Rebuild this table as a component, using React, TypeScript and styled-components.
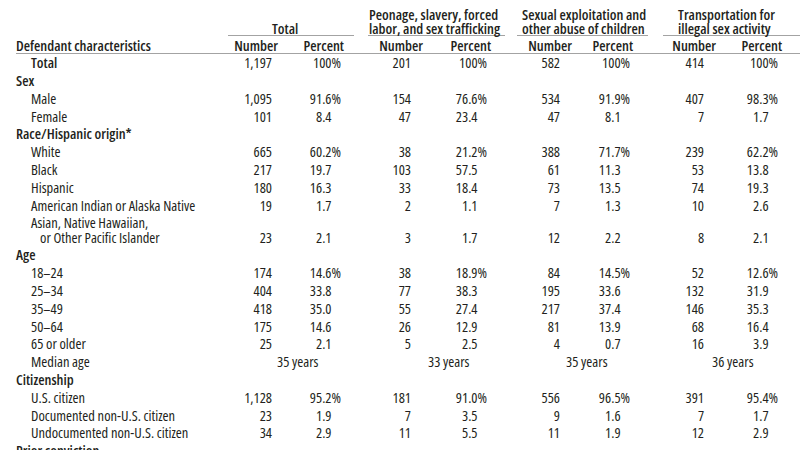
import React from "react";
import styled, { createGlobalStyle } from "styled-components";

type Group = {
  title: string[];
  numW: number;
  pctW: number;
  numPad: number;
  pctPad: number;
  pctHeadPad: number;
  ruleLeft: number;
  titlePad: number;
  medianPad: number;
};

type Row =
  | { kind: "total" | "item"; label: string[]; values: string[] }
  | { kind: "cat"; label: string[] }
  | { kind: "median"; label: string[]; medians: string[] };

const groups: Group[] = [
  { title: ["", "Total"], numW: 50, pctW: 76, numPad: 6, pctPad: 13, pctHeadPad: 10, ruleLeft: 0, titlePad: 44, medianPad: 49 },
  { title: ["Peonage, slavery, forced", "labor, and sex trafficking"], numW: 69, pctW: 82, numPad: 12, pctPad: 18, pctHeadPad: 14, ruleLeft: 14, titlePad: 1, medianPad: 74 },
  { title: ["Sexual exploitation and", "other abuse of children"], numW: 67, pctW: 76, numPad: 12, pctPad: 18, pctHeadPad: 15, ruleLeft: 12, titlePad: 5, medianPad: 61 },
  { title: ["Transportation for", "illegal sex activity"], numW: 68, pctW: 90, numPad: 12, pctPad: 28, pctHeadPad: 24, ruleLeft: 15, titlePad: 15, medianPad: 64 },
];

const rows: Row[] = [
  { kind: "total", label: ["Total"], values: ["1,197", "100%", "201", "100%", "582", "100%", "414", "100%"] },
  { kind: "cat", label: ["Sex"] },
  { kind: "item", label: ["Male"], values: ["1,095", "91.6%", "154", "76.6%", "534", "91.9%", "407", "98.3%"] },
  { kind: "item", label: ["Female"], values: ["101", "8.4", "47", "23.4", "47", "8.1", "7", "1.7"] },
  { kind: "cat", label: ["Race/Hispanic origin*"] },
  { kind: "item", label: ["White"], values: ["665", "60.2%", "38", "21.2%", "388", "71.7%", "239", "62.2%"] },
  { kind: "item", label: ["Black"], values: ["217", "19.7", "103", "57.5", "61", "11.3", "53", "13.8"] },
  { kind: "item", label: ["Hispanic"], values: ["180", "16.3", "33", "18.4", "73", "13.5", "74", "19.3"] },
  { kind: "item", label: ["American Indian or Alaska Native"], values: ["19", "1.7", "2", "1.1", "7", "1.3", "10", "2.6"] },
  { kind: "item", label: ["Asian, Native Hawaiian,", "or Other Pacific Islander"], values: ["23", "2.1", "3", "1.7", "12", "2.2", "8", "2.1"] },
  { kind: "cat", label: ["Age"] },
  { kind: "item", label: ["18–24"], values: ["174", "14.6%", "38", "18.9%", "84", "14.5%", "52", "12.6%"] },
  { kind: "item", label: ["25–34"], values: ["404", "33.8", "77", "38.3", "195", "33.6", "132", "31.9"] },
  { kind: "item", label: ["35–49"], values: ["418", "35.0", "55", "27.4", "217", "37.4", "146", "35.3"] },
  { kind: "item", label: ["50–64"], values: ["175", "14.6", "26", "12.9", "81", "13.9", "68", "16.4"] },
  { kind: "item", label: ["65 or older"], values: ["25", "2.1", "5", "2.5", "4", "0.7", "16", "3.9"] },
  { kind: "median", label: ["Median age"], medians: ["35 years", "33 years", "35 years", "36 years"] },
  { kind: "cat", label: ["Citizenship"] },
  { kind: "item", label: ["U.S. citizen"], values: ["1,128", "95.2%", "181", "91.0%", "556", "96.5%", "391", "95.4%"] },
  { kind: "item", label: ["Documented non-U.S. citizen"], values: ["23", "1.9", "7", "3.5", "9", "1.6", "7", "1.7"] },
  { kind: "item", label: ["Undocumented non-U.S. citizen"], values: ["34", "2.9", "11", "5.5", "11", "1.9", "12", "2.9"] },
  { kind: "cat", label: ["Prior conviction"] },
];

const GlobalStyle = createGlobalStyle`
  body {
    margin: 0;
    background: #ffffff;
    overflow: hidden;
    font-family: "Open Sans", "Liberation Sans", sans-serif;
    font-stretch: 75%;
    color: #231f20;
  }
`;

const Page = styled.div`
  width: 800px;
  height: 450px;
  overflow: hidden;
`;

const Table = styled.table`
  border-collapse: collapse;
  table-layout: fixed;
  width: 790px;
  margin-left: 16px;
  font-size: 14.5px;
`;

const GroupHead = styled.th`
  padding: 7px 0 0 0;
  vertical-align: bottom;
  font-weight: 600;
  text-align: left;
`;

const Rule = styled.div<{ $left: number; $pad: number }>`
  margin-left: ${(p) => p.$left}px;
  padding-left: ${(p) => p.$pad}px;
  border-bottom: 1px solid #a3a3a3;
  line-height: 13.5px;
  padding-top: 1px;
  white-space: nowrap;
`;

const ColHead = styled.th<{ $pad?: number; $align?: string }>`
  padding: 3px ${(p) => p.$pad ?? 0}px 0 0;
  height: 13px;
  line-height: 14px;
  font-weight: 600;
  text-align: ${(p) => p.$align ?? "right"};
  border-bottom: 1px solid #a3a3a3;
  white-space: nowrap;
`;

const BodyRow = styled.tr<{ $tall?: boolean }>`
  height: ${(p) => (p.$tall ? 32 : 17.8)}px;
`;

const Label = styled.td<{ $kind: string }>`
  padding: 0 0 1px ${(p) => (p.$kind === "cat" ? 0 : 15)}px;
  font-weight: ${(p) => (p.$kind === "total" || p.$kind === "cat" ? 600 : 400)};
  line-height: 15px;
  vertical-align: bottom;
  white-space: nowrap;
`;

const SubLine = styled.div<{ $indent?: boolean }>`
  padding-left: ${(p) => (p.$indent ? 9 : 0)}px;
`;

const Value = styled.td<{ $pad: number }>`
  padding: 0 ${(p) => p.$pad}px 1px 0;
  text-align: right;
  line-height: 15px;
  vertical-align: bottom;
  white-space: nowrap;
`;

const Median = styled.td<{ $pad: number }>`
  padding: 0 0 1px ${(p) => p.$pad}px;
  text-align: left;
  line-height: 15px;
  vertical-align: bottom;
  white-space: nowrap;
`;

const Ghost = styled.span`
  visibility: hidden;
`;

const Pct = ({ v }: { v: string }) =>
  v.endsWith("%") ? <>{v}</> : (
    <>
      {v}
      <Ghost>%</Ghost>
    </>
  );

export default function App() {
  return (
    <Page>
      <GlobalStyle />
      <Table>
        <colgroup>
          <col style={{ width: 212 }} />
          {groups.map((g, i) => (
            <React.Fragment key={i}>
              <col style={{ width: g.numW }} />
              <col style={{ width: g.pctW }} />
            </React.Fragment>
          ))}
        </colgroup>
        <thead>
          <tr>
            <th />
            {groups.map((g, i) => (
              <GroupHead key={i} colSpan={2}>
                <Rule $left={g.ruleLeft} $pad={g.titlePad}>
                  {g.title[0] || "\u00a0"}
                  <br />
                  {g.title[1]}
                </Rule>
              </GroupHead>
            ))}
          </tr>
          <tr>
            <ColHead $align="left">Defendant characteristics</ColHead>
            {groups.map((g, i) => (
              <React.Fragment key={i}>
                <ColHead>Number</ColHead>
                <ColHead $pad={g.pctHeadPad}>Percent</ColHead>
              </React.Fragment>
            ))}
          </tr>
        </thead>
        <tbody>
          {rows.map((r, i) => (
            <BodyRow key={i} $tall={r.label.length > 1}>
              <Label $kind={r.kind}>
                {r.label.map((l, j) => (
                  <SubLine key={j} $indent={j > 0}>
                    {l}
                  </SubLine>
                ))}
              </Label>
              {r.kind === "cat" && <td colSpan={8} />}
              {(r.kind === "total" || r.kind === "item") &&
                groups.map((g, gi) => (
                  <React.Fragment key={gi}>
                    <Value $pad={g.numPad}>{r.values[gi * 2]}</Value>
                    <Value $pad={g.pctPad}>
                      <Pct v={r.values[gi * 2 + 1]} />
                    </Value>
                  </React.Fragment>
                ))}
              {r.kind === "median" &&
                groups.map((g, gi) => (
                  <Median key={gi} colSpan={2} $pad={g.medianPad}>
                    {r.medians[gi]}
                  </Median>
                ))}
            </BodyRow>
          ))}
        </tbody>
      </Table>
    </Page>
  );
}
